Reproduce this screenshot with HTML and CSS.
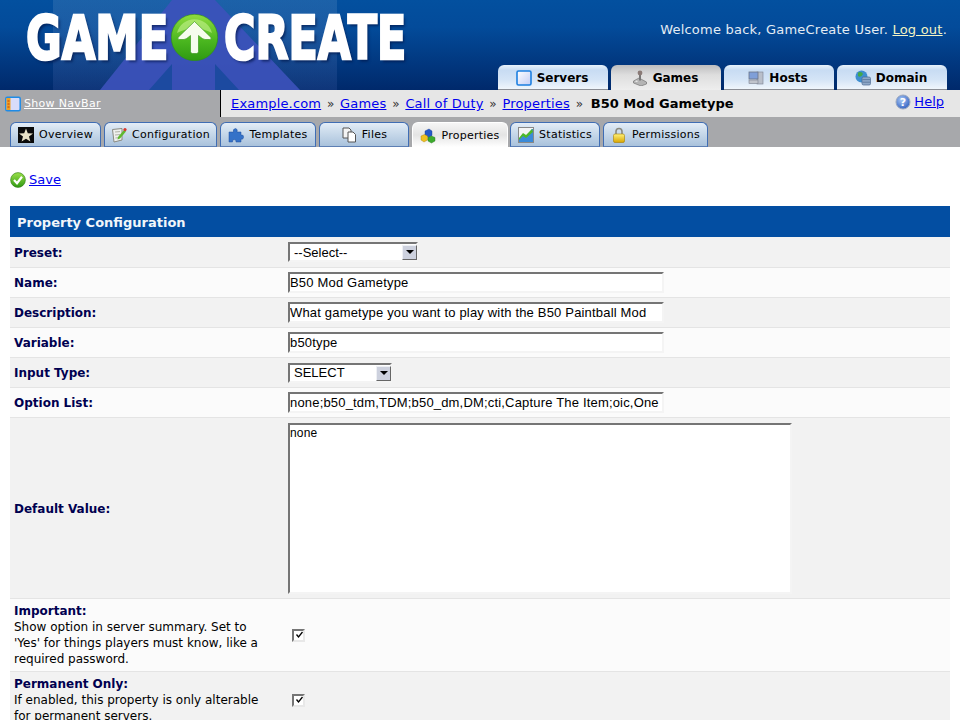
FILE: index.html
```html
<!DOCTYPE html>
<html lang="en">
<head>
<meta charset="utf-8">
<title>GameCreate - Properties</title>
<link rel="stylesheet" href="styles.css">
</head>
<body>
<svg class="defs" width="0" height="0">
  <defs>
    <linearGradient id="gGreen" x1="0" y1="0" x2="0" y2="1"><stop offset="0" stop-color="#9be04a"/><stop offset="1" stop-color="#2f9a12"/></linearGradient>
    <linearGradient id="gBall" x1="0" y1="0" x2="0" y2="1"><stop offset="0" stop-color="#8fdc3e"/><stop offset=".55" stop-color="#4cb820"/><stop offset="1" stop-color="#2f9a12"/></linearGradient>
    <linearGradient id="gSky" x1="0" y1="0" x2="1" y2="1"><stop offset="0" stop-color="#ffffff"/><stop offset="1" stop-color="#c3cdf5"/></linearGradient>
    <linearGradient id="gGold" x1="0" y1="0" x2="0" y2="1"><stop offset="0" stop-color="#fff27a"/><stop offset="1" stop-color="#d9a500"/></linearGradient>
    <linearGradient id="gPanel" x1="0" y1="0" x2="0" y2="1"><stop offset="0" stop-color="#fff" stop-opacity=".1"/><stop offset="1" stop-color="#6a80d0" stop-opacity=".14"/></linearGradient>
    <radialGradient id="gHelp" cx=".4" cy=".35" r=".7"><stop offset="0" stop-color="#a9c8f5"/><stop offset="1" stop-color="#2f5fc0"/></radialGradient>
  </defs>
</svg>
<header class="top">
  <svg class="watermark" width="284" height="90" viewBox="0 0 284 90">
    <rect width="284" height="90" fill="url(#gPanel)"/>
    <path d="M47 90 L119 0 L162 0 L247 90 Z" fill="#3d52bb" opacity=".9"/>
    <path d="M96 90 L119 64 L119 90 Z M162 90 L162 64 L186 90 Z" fill="#1c4aa0"/>
  </svg>
  <div class="logo">
    <span class="logo-word logo-game">GAME</span>
    <svg class="logo-ball" width="47" height="47" viewBox="0 0 47 47">
      <circle cx="23.5" cy="23.5" r="23.2" fill="url(#gBall)" stroke="#2f8f12" stroke-width=".6"/>
      <path d="M6 19 A18 18 0 0 1 41 19 A24 14 0 0 0 6 19 Z" fill="#b8ec80" opacity=".7"/>
      <path d="M23.5 7.5 L7 23.5 Q6 25.5 8.5 25.5 L13 25.5 Q15 25.5 19.5 21.5 L19.5 37.5 Q19.5 39.5 21.5 39.5 L25.5 39.5 Q27.5 39.5 27.5 37.5 L27.5 21.5 Q32 25.5 34 25.5 L38.5 25.5 Q41 25.5 40 23.5 Z" fill="#f6fcee" stroke="#2f8f12" stroke-width=".6"/>
    </svg>
    <span class="logo-word logo-create">CREATE</span>
  </div>
  <p class="welcome">Welcome back, GameCreate User. <a href="#">Log out</a>.</p>
  <nav class="main-tabs">
    <a class="main-tab" href="#"><svg class="ico" viewBox="0 0 16 16"><rect x="1" y="1" width="14" height="14" rx="1.5" fill="url(#gSky)" stroke="#1c7fe0" stroke-width="1.6"/></svg>Servers</a>
    <a class="main-tab is-active" href="#"><svg class="ico" viewBox="0 0 16 16"><path d="M1.5 11 L7 8 L14.5 12 L14.5 14 L9 16 L1.5 13 Z" fill="#b4b4b4" stroke="#666" stroke-width=".6"/><rect x="7" y="3" width="2" height="7.5" fill="#777"/><circle cx="8" cy="3" r="2.4" fill="#8a7a76"/><ellipse cx="4.5" cy="11.2" rx="1.3" ry=".8" fill="#e8e8e8"/></svg>Games</a>
    <a class="main-tab" href="#"><svg class="ico" viewBox="0 0 16 16"><rect x="9" y="2" width="6" height="12" fill="#b9bfca" stroke="#7a8090" stroke-width=".6"/><rect x="1" y="2" width="9" height="7" fill="#7f9fd8" stroke="#6a7488" stroke-width=".8"/><rect x="1" y="10" width="9" height="3.5" fill="#c0c4cc" stroke="#7a8090" stroke-width=".6"/></svg>Hosts</a>
    <a class="main-tab" href="#"><svg class="ico" viewBox="0 0 16 16"><circle cx="6.5" cy="6.5" r="6" fill="#3f8fd0"/><path d="M3 2.5 Q7 1 8 4 Q6 8 3 6 Z M8 9 L11 8 L10 12 Z" fill="#43a84a"/><rect x="7" y="7" width="8.5" height="8" rx="1.5" fill="#8ea8c8" stroke="#4f6a90" stroke-width=".7"/><path d="M7.5 9.6 H15 M7.5 12.2 H15" stroke="#4f6a90" stroke-width=".7"/></svg>Domain</a>
  </nav>
</header>

<div class="crumb-row">
  <div class="navbar-toggle">
    <svg class="ico" viewBox="0 0 16 16"><rect x=".8" y="1.2" width="14.4" height="13.6" rx="1.5" fill="#d8dcfa" stroke="#1f8be6" stroke-width="1.5"/><rect x="1.5" y="2" width="4" height="12" fill="#f0a020"/><path d="M2.5 5 H4.5 M2.5 8 H4.5 M2.5 11 H4.5" stroke="#c03a10" stroke-width="1.2"/></svg>
    <a href="#">Show NavBar</a>
  </div>
  <div class="crumbs">
    <a href="#">Example.com</a><span class="sep">»</span><a href="#">Games</a><span class="sep">»</span><a href="#">Call of Duty</a><span class="sep">»</span><a href="#">Properties</a><span class="sep">»</span><strong>B50 Mod Gametype</strong>
  </div>
  <div class="help">
    <svg class="ico" viewBox="0 0 16 16"><circle cx="8" cy="8" r="7" fill="url(#gHelp)" stroke="#9aa8c0"/><text x="8" y="11.5" class="help-q">?</text></svg>
    <a href="#">Help</a>
  </div>
</div>

<nav class="sub-tabs">
  <a class="sub-tab w-overview" href="#"><svg class="ico" viewBox="0 0 16 16"><rect width="16" height="16" fill="#0a0a0a"/><path d="M8 1.5 L9.8 6.2 L15 6.4 L11 9.6 L12.4 14.6 L8 11.8 L3.6 14.6 L5 9.6 L1 6.4 L6.2 6.2 Z" fill="#e8e2c8"/></svg>Overview</a>
  <a class="sub-tab w-config" href="#"><svg class="ico" viewBox="0 0 16 16"><path d="M1.5 2.5 L11 1.5 L11 13 L3 15 Z" fill="#eef0ee" stroke="#8a8a80"/><path d="M4 5 L9 4.6 M4 8 L9 7.6 M4.4 11 L8 10.6" stroke="#a0a090" stroke-width=".8"/><path d="M7 10 L13 3 L15 4.5 L9 11.5 L6.5 12.5 Z" fill="#5fb82e"/><circle cx="14" cy="2.6" r="1.6" fill="#d8352a"/></svg>Configuration</a>
  <a class="sub-tab w-templates" href="#"><svg class="ico" viewBox="0 0 16 16"><path d="M1 5 H5.5 Q4.5 2 7.5 1.5 Q10 2 9 5 H13 V8 Q16 7.5 15.5 10.5 Q15 13 13 12 V15 H8 Q8.5 12.5 6 12.5 Q4 13 4.5 15 H1 Z" fill="#3572c8" stroke="#1f4f9e" stroke-width=".5"/></svg>Templates</a>
  <a class="sub-tab w-files" href="#"><svg class="ico" viewBox="0 0 16 16"><path d="M2 1 H8 L10 3 V11 H2 Z" fill="#f4f4f4" stroke="#555"/><path d="M7 5 H12 L14.5 7.5 V15 H7 Z" fill="#fff" stroke="#555"/></svg>Files</a>
  <a class="sub-tab is-active w-properties" href="#"><svg class="ico" viewBox="0 0 16 16"><path d="M5 3 L9 1 L12 3 V7.5 L8.5 9.5 L5 7.5 Z" fill="#2458c8" stroke="#163a8a" stroke-width=".4"/><path d="M1 8 L4.5 6.5 L7.5 8 V12 L4 14 L1 12 Z" fill="#f0c020" stroke="#a07a10" stroke-width=".4"/><path d="M8 9.5 L11.5 8 L15 9.5 V13 L11.5 15 L8 13 Z" fill="#3caa2c" stroke="#1f7018" stroke-width=".4"/></svg>Properties</a>
  <a class="sub-tab w-stats" href="#"><svg class="ico" viewBox="0 0 16 16"><rect x=".5" y=".5" width="15" height="15" fill="#f4f4f4" stroke="#888"/><path d="M1 12 L5 7 L8 9 L14 2 L15 2 L15 15 L1 15 Z" fill="#3a8ad8"/><path d="M1 11 L5 6 L8 8 L14 2 L15 5 L8 11 L5 9 L1 13 Z" fill="#4cb828"/></svg>Statistics</a>
  <a class="sub-tab w-perms" href="#"><svg class="ico" viewBox="0 0 16 16"><path d="M5 8 V4.5 Q5 1.5 8 1.5 Q11 1.5 11 4.5 V8" fill="none" stroke="#8a8a80" stroke-width="1.6"/><rect x="2.5" y="7" width="11" height="8.5" rx="1.5" fill="url(#gGold)" stroke="#a88000" stroke-width=".6"/></svg>Permissions</a>
</nav>

<main class="content">
  <p class="save">
    <svg class="ico" viewBox="0 0 16 16"><circle cx="8" cy="8" r="7.4" fill="url(#gGreen)" stroke="#2f7a18" stroke-width=".6"/><path d="M4 8 L7 11.2 L12 4.8" fill="none" stroke="#fff" stroke-width="2.2"/></svg>
    <a href="#">Save</a>
  </p>
  <form class="panel">
    <h2 class="panel-title">Property Configuration</h2>
    <div class="row">
      <label class="lab"><b>Preset:</b></label>
      <div class="ctl"><span class="select w-preset"><select><option>--Select--</option></select><span class="arrow"></span></span></div>
    </div>
    <div class="row alt">
      <label class="lab"><b>Name:</b></label>
      <div class="ctl"><input class="text" type="text" value="B50 Mod Gametype"></div>
    </div>
    <div class="row">
      <label class="lab"><b>Description:</b></label>
      <div class="ctl"><input class="text" type="text" value="What gametype you want to play with the B50 Paintball Mod"></div>
    </div>
    <div class="row alt">
      <label class="lab"><b>Variable:</b></label>
      <div class="ctl"><input class="text" type="text" value="b50type"></div>
    </div>
    <div class="row">
      <label class="lab"><b>Input Type:</b></label>
      <div class="ctl"><span class="select w-type"><select><option>SELECT</option></select><span class="arrow"></span></span></div>
    </div>
    <div class="row alt">
      <label class="lab"><b>Option List:</b></label>
      <div class="ctl"><input class="text" type="text" value="none;b50_tdm,TDM;b50_dm,DM;cti,Capture The Item;oic,One In The Chamber"></div>
    </div>
    <div class="row tall">
      <label class="lab"><b>Default Value:</b></label>
      <div class="ctl"><textarea class="area">none</textarea></div>
    </div>
    <div class="row alt desc">
      <label class="lab"><b>Important:</b><br>Show option in server summary. Set to 'Yes' for things players must know, like a required password.</label>
      <div class="ctl"><span class="check"><svg viewBox="0 0 9 9" width="9" height="9"><path d="M1.5 3.5 L3.5 6 L7.5 1" fill="none" stroke="#000" stroke-width="1.3"/></svg></span></div>
    </div>
    <div class="row desc">
      <label class="lab"><b>Permanent Only:</b><br>If enabled, this property is only alterable for permanent servers.</label>
      <div class="ctl"><span class="check"><svg viewBox="0 0 9 9" width="9" height="9"><path d="M1.5 3.5 L3.5 6 L7.5 1" fill="none" stroke="#000" stroke-width="1.3"/></svg></span></div>
    </div>
  </form>
</main>
</body>
</html>
```
FILE: styles.css
```css
html { overflow: hidden; }
body {
  margin: 0;
  background: #fff;
  color: #000;
  font: 12px/16px "DejaVu Sans", sans-serif;
}
.defs { position: absolute; }
a { color: #0000ee; }
.ico { width: 16px; height: 16px; flex: none; display: block; }
.help-q { fill: #fff; font: bold 11px "DejaVu Sans", sans-serif; text-anchor: middle; }

.top {
  position: relative;
  height: 90px;
  overflow: hidden;
  background: linear-gradient(#03509f 0, #034b9a 30%, #00296b 100%);
}
.watermark { position: absolute; left: 53px; top: 0; }
.logo {
  position: absolute;
  left: 26px;
  top: 13px;
  display: flex;
  align-items: center;
  height: 48px;
}
.logo-word {
  display: block;
  position: relative;
  top: 1px;
  color: #fff;
  font: 900 60px/48px "DejaVu Sans", sans-serif;
  -webkit-text-stroke: 2.5px #fff;
  text-shadow: 3px 3px 3px rgba(0, 20, 70, .65);
  transform-origin: left center;
  white-space: nowrap;
}
.logo-game { width: 145px; transform: scaleX(.725); }
.logo-create { width: 182px; transform: scaleX(.715); margin-left: 6px; }
.logo-ball { display: block; flex: none; }
.welcome {
  position: absolute;
  right: 13px;
  top: 22px;
  margin: 0;
  color: #e4ecf4;
  font-size: 13px;
  letter-spacing: .22px;
}
.welcome a { color: #f4f4c4; }
.main-tabs {
  position: absolute;
  left: 498px;
  top: 65px;
  display: flex;
  gap: 3px;
}
.main-tab {
  display: flex;
  align-items: center;
  justify-content: center;
  gap: 5px;
  width: 110px;
  height: 25px;
  box-sizing: border-box;
  padding: 1px 2px 0 0;
  border-radius: 6px 6px 0 0;
  border-bottom: 1px solid #8c8f96;
  background: linear-gradient(#e8f2fb 0, #c8dcf3 22%, #d4e4f6 60%, #f0f6fc 100%);
  color: #000;
  font-weight: bold;
  text-decoration: none;
}
.main-tab.is-active { background: linear-gradient(#bdbdbf 0, #dedede 40%, #eeeeee 100%); border-bottom: 0; }

.crumb-row { display: flex; height: 27px; background: #e6e6e6; }
.navbar-toggle {
  display: flex;
  align-items: center;
  gap: 3px;
  width: 215px;
  padding: 1px 0 0 5px;
  background: #a7a8ab;
  border-right: 1px solid #000;
  font-size: 11px;
  letter-spacing: .3px;
}
.navbar-toggle a { color: #fff; }
.crumbs {
  flex: 1;
  display: flex;
  align-items: center;
  padding: 1px 0 0 10px;
  font-size: 13px;
}
.crumbs a { letter-spacing: .17px; }
.crumbs .sep { margin: 0 5.8px; font-size: 12px; color: #333; }
.crumbs strong { margin-left: 2px; }
.help {
  display: flex;
  align-items: flex-start;
  gap: 3px;
  padding: 4px 16px 0 0;
  font-size: 13px;
}

.sub-tabs {
  display: flex;
  gap: 3px;
  height: 25px;
  padding: 5px 0 0 10px;
  background: #a7a8ab;
}
.sub-tab {
  display: flex;
  align-items: center;
  justify-content: center;
  gap: 5px;
  height: 25px;
  box-sizing: border-box;
  padding-top: 1px;
  border: 1px solid #3f6db4;
  border-bottom-color: #5d7fb4;
  border-radius: 6px 6px 0 0;
  background: linear-gradient(#e4edf7 0, #d3e1ef 25%, #a9c2dc 100%);
  color: #000;
  font-size: 11px;
  letter-spacing: .25px;
  text-decoration: none;
}
.sub-tab.is-active {
  border-color: #fff;
  border-bottom: 0;
  background: linear-gradient(#f6f6f6 0, #e4e4e4 50%, #fff 100%);
}
.w-overview { width: 91px; }
.w-config { width: 113px; }
.w-templates { width: 96px; }
.w-files { width: 90px; }
.w-properties { width: 96px; }
.w-stats { width: 90px; margin-left: -1px; }
.w-perms { width: 105px; }

.content { padding: 25px 10px 0; }
.save {
  display: flex;
  align-items: center;
  gap: 3px;
  height: 16px;
  margin: 0 0 18px;
  font-size: 13px;
}
.panel-title {
  margin: 0;
  height: 31px;
  padding-left: 7px;
  background: #034ea2;
  color: #f2f6fa;
  font-size: 13px;
  line-height: 33px;
}
.row {
  display: flex;
  align-items: center;
  box-sizing: border-box;
  min-height: 30px;
  background: #f2f2f2;
}
.row + .row { border-top: 1px solid #e4e4e4; }
.row.alt { background: #fbfbfb; }
.row.tall { height: 181px; }
.lab { width: 258px; padding: 1px 12px 0 4px; flex: none; }
.lab b { color: #000050; }
.desc .lab { padding-top: 4px; padding-bottom: 4px; }
.ctl { margin-left: 4px; display: flex; align-items: center; }
.text, .area, .select {
  box-sizing: border-box;
  border: 2px solid;
  border-color: #757575 #f4f4f4 #f4f4f4 #757575;
  border-radius: 0;
  background: #fff;
  color: #000;
  font: 13px "Liberation Sans", sans-serif;
}
.area { font-size: 12px; }
.text { width: 376px; height: 21px; padding: 0; outline: 0; letter-spacing: .18px; }
.area { display: block; width: 504px; height: 171px; padding: 1px 0 0; resize: none; letter-spacing: .2px; }
.select { position: relative; display: block; height: 20px; }
.w-preset { width: 130px; }
.w-type { width: 104px; }
.select select {
  appearance: none;
  display: block;
  width: 100%;
  height: 16px;
  border: 0;
  padding: 0 0 0 4px;
  background: transparent;
  font: inherit;
  color: inherit;
}
.arrow {
  position: absolute;
  right: -1px;
  top: 1px;
  width: 15px;
  height: 15px;
  box-sizing: border-box;
  background: #cdd1de;
  border: 1px solid;
  border-color: #eef0f4 #666 #666 #eef0f4;
}
.arrow::after {
  content: "";
  position: absolute;
  left: 3px;
  top: 4px;
  border: 4px solid transparent;
  border-top: 4px solid #000;
  border-bottom: 0;
}
.check {
  display: block;
  box-sizing: border-box;
  width: 13px;
  height: 13px;
  margin-left: 4px;
  padding: 0 0 0 1px;
  border: 2px solid;
  border-color: #757575 #e8e8e8 #e8e8e8 #757575;
  background: #fff;
  line-height: 0;
}
```
